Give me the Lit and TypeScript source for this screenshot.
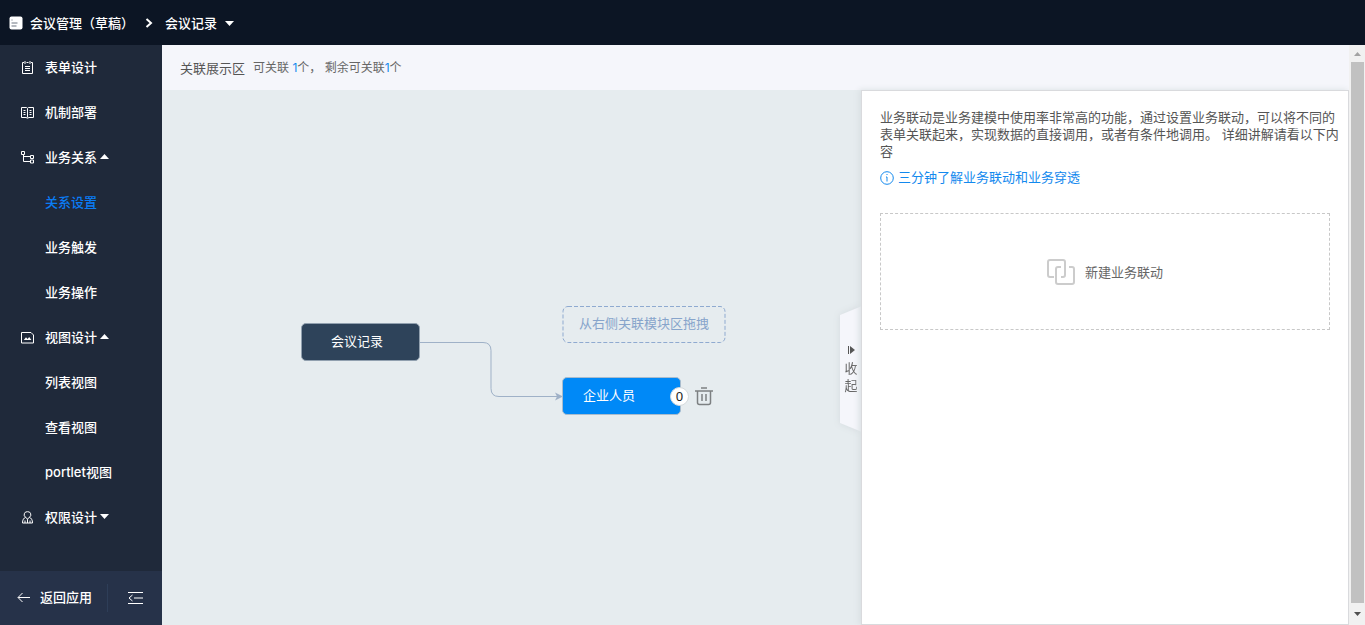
import { LitElement, html, css, svg, nothing } from "lit";
import { customElement, property, state } from "lit/decorators.js";
import { classMap } from "lit/directives/class-map.js";

const icons = {
  form: svg`<path d="M3 1.500H1.500v11h10v-11H10M4 0v3M9 0v3M5.500 1.500h2M4 5.500h5M4 7.500h5M4 9.500h5"/>`,
  book: svg`<path d="M.5 1.500h5l1 .8 1-.8h5v10H8l-1.500.700-1.500-.700H.5zM6.500 2.500v9M2.500 4.500h2M2.500 6.500h2M2.500 8.500h2M8.500 4.500h2M8.500 6.500h2M8.500 8.500h2"/>`,
  relation: svg`<path d="M.5 .5h3v3h-3zM2.500 4v6.500h7M2.500 5.500h7M9.500 4.500h3v3h-3zM9.500 9h3v3h-3z"/>`,
  view: svg`<path d="M.5 1.500h9.500l2.500 2.500v8h-12z"/><path d="M2.800 9l2.200-2.700L6.500 8l1.700-2L10.400 9z" fill="currentColor" stroke="none"/>`,
  user: svg`<path d="M6.500 .7a3 3 0 0 1 1.800 5.600c2 .7 3.200 2.500 3.200 5.700h-10c0-3.200 1.200-5 3.200-5.700A3 3 0 0 1 6.500 .7zM4.700 6.300l1.800 1.900 1.800-1.900M6.500 8.200V12M4 9.500V12M9 9.500V12"/>`,
};

type Entry = { label: string; icon?: keyof typeof icons; children?: string[]; open?: boolean };

@customElement("side-nav")
class SideNav extends LitElement {
  @property() current = "关系设置";
  @state() entries: Entry[] = [
    { label: "表单设计", icon: "form" },
    { label: "机制部署", icon: "book" },
    { label: "业务关系", icon: "relation", open: true, children: ["关系设置", "业务触发", "业务操作"] },
    { label: "视图设计", icon: "view", open: true, children: ["列表视图", "查看视图", "portlet视图"] },
    { label: "权限设计", icon: "user", open: false, children: [] },
  ];

  static styles = css`
    :host { display: flex; flex-direction: column; background: #1f293a; color: #fff; }
    nav { flex: 1; overflow: hidden; }
    ul { list-style: none; margin: 0; padding: 0; }
    .item {
      display: flex; align-items: center; width: 100%; height: 45px; box-sizing: border-box;
      padding: 0 0 2px 45px; border: 0; background: none; color: inherit; font: inherit;
      font-weight: 500; text-decoration: none; cursor: pointer;
    }
    .item.top { padding-left: 21px; }
    .item.active { color: #0a7cf5; }
    .icon { width: 13px; height: 13px; margin: 2px 11px 0 0; fill: none; stroke: currentColor; stroke-width: 1; }
    .caret { width: 9px; height: 5px; margin-left: 3px; fill: #fff; }
    .caret.closed { transform: rotate(180deg); }
    .foot { display: flex; align-items: center; height: 54px; background: #263249; }
    .back, .fold { display: flex; align-items: center; border: 0; background: none; color: inherit; font: inherit; font-weight: 500; padding: 0; cursor: pointer; }
    .back { width: 90px; height: 28px; padding: 0 0 0 17px; gap: 9px; border-right: 1px solid #2e3e58; box-sizing: content-box; }
    .back span { padding-bottom: 2px; }
    .fold { flex: 1; justify-content: center; }
    .line { fill: none; stroke: #fff; stroke-width: 1; }
  `;

  toggle(entry: Entry) {
    if (!entry.children) return;
    this.entries = this.entries.map((e) => (e === entry ? { ...e, open: !e.open } : e));
  }

  render() {
    return html`
      <nav aria-label="主导航">
        <ul>
          ${this.entries.map((e) => html`
            <li>
              <button class="item top" @click=${() => this.toggle(e)}>
                <svg class="icon" viewBox="0 0 13 13" aria-hidden="true">${e.icon ? icons[e.icon] : nothing}</svg>
                <span>${e.label}</span>
                ${e.children
                  ? html`<svg class=${classMap({ caret: true, closed: !e.open })} viewBox="0 0 9 5" aria-hidden="true"><path d="M0 5L4.500 0L9 5z"/></svg>`
                  : nothing}
              </button>
              ${e.children && e.open
                ? html`<ul>${e.children.map((c) => html`
                    <li><a href="#" class=${classMap({ item: true, active: c === this.current })}>${c}</a></li>`)}</ul>`
                : nothing}
            </li>`)}
        </ul>
      </nav>
      <div class="foot">
        <button class="back">
          <svg class="line" width="14" height="12" viewBox="0 0 14 12" aria-hidden="true"><path d="M13 5.500H1.200M5.500 1L1 5.500l4.500 4.500"/></svg>
          <span>返回应用</span>
        </button>
        <button class="fold" aria-label="收起菜单">
          <svg class="line" width="15" height="14" viewBox="0 0 15 14" aria-hidden="true"><path d="M0 1.500h15M6 7h9M0 12.500h15M4.500 4L1 7l3.500 3"/></svg>
        </button>
      </div>`;
  }
}

@customElement("relation-canvas")
class RelationCanvas extends LitElement {
  static styles = css`
    :host { display: block; position: relative; background: #e6ecef; overflow: hidden; }
    .edge { position: absolute; left: 257px; top: 251px; fill: none; stroke: #9fb1c7; }
    .arrow { fill: #9fb1c7; stroke: none; }
    .node { position: absolute; box-sizing: border-box; border-radius: 5px; display: flex; align-items: center; color: #fff; padding-bottom: 2px; }
    .root { left: 139px; top: 233px; width: 119px; height: 38px; padding-left: 29px; background: #2e435a; border: 1px solid #91a0af; }
    .target { left: 400px; top: 287px; width: 119px; height: 38px; padding-left: 20px; background: #0089f7; border: 1px solid #a9bccd; }
    .drop { left: 400px; top: 215px; width: 164px; height: 38px; justify-content: center; }
    .drop span { color: #87a4cb; }
    .outline { position: absolute; inset: 0; width: 100%; height: 100%; fill: none; stroke: #8faad0; stroke-dasharray: 4 2; }
    .badge {
      position: absolute; left: 508px; top: 297px; width: 19px; height: 19px; box-sizing: border-box;
      border: 1px solid #d5dadd; border-radius: 50%; background: #fff; color: #222;
      font-family: "Noto Sans", sans-serif; font-size: 13px; line-height: 17px; text-align: center;
    }
    .remove { position: absolute; left: 533px; top: 297px; padding: 0; border: 0; background: none; cursor: pointer; line-height: 0; }
    .trash { fill: none; stroke: #7d8082; stroke-width: 1.500; }
    .tab {
      position: absolute; right: -1px; top: 216px; width: 22px; height: 126px; padding: 0; border: 0;
      background: none; color: #666; font: inherit; line-height: 17px; cursor: pointer;
      filter: drop-shadow(0 0 3px #d3dade);
    }
    .shape { position: absolute; inset: 0; fill: #f5f6fb; }
    .label { position: relative; display: flex; flex-direction: column; align-items: center; gap: 2px; padding-top: 2px; }
    .play { fill: #555; margin-bottom: 4px; }
  `;

  render() {
    return html`
      <svg class="edge" width="145" height="64" viewBox="0 0 145 64" aria-hidden="true">
        <path d="M0 1.500h64q8 0 8 8v38q0 8 8 8h58"/>
        <path class="arrow" d="M136 51.500l8 4-8 4 2-4z"/>
      </svg>
      <div class="node root">会议记录</div>
      <div class="node drop">
        <svg class="outline" aria-hidden="true"><rect x="1" y="1.500" width="162" height="36" rx="5"/></svg>
        <span>从右侧关联模块区拖拽</span>
      </div>
      <div class="node target">企业人员</div>
      <div class="badge">0</div>
      <button class="remove" aria-label="删除">
        <svg class="trash" width="18" height="19" viewBox="0 0 18 19" aria-hidden="true">
          <path d="M0 4h18M6 1h6M2.500 4v11.500q0 2 2 2h9q2 0 2-2V4M7 7v7M11 7v7"/>
        </svg>
      </button>
      <button class="tab">
        <svg class="shape" width="22" height="126" viewBox="0 0 22 126" aria-hidden="true"><path d="M22 0L0 9v108l22 9z"/></svg>
        <span class="label">
          <svg class="play" width="7" height="8" viewBox="0 0 7 8" aria-hidden="true"><path d="M0 0h1v8H0zM2 0l5 4-5 4z"/></svg>
          <span>收<br />起</span>
        </span>
      </button>`;
  }
}

@customElement("linkage-panel")
class LinkagePanel extends LitElement {
  static styles = css`
    :host { display: block; position: relative; box-sizing: border-box; background: #fff; border: 1px solid #d9dadd; padding: 18px; color: #555; box-shadow: -2px 0 6px #d9dfe2; }
    p { margin: 0 -10px 0 0; line-height: 17px; color: #555; }
    .guide { display: flex; align-items: center; gap: 4px; margin: 9px 0 27px; line-height: 17px; color: #1389ee; text-decoration: none; }
    .info { fill: none; stroke: currentColor; }
    .create {
      display: flex; align-items: center; justify-content: center; gap: 10px; width: 100%; height: 117px;
      border: 1px dashed #c8c8c8; background: none; font: inherit; color: #666; cursor: pointer; padding: 0;
    }
    .link { fill: none; stroke: #ccc; stroke-width: 2; }
  `;

  render() {
    return html`
      <p>业务联动是业务建模中使用率非常高的功能，通过设置业务联动，可以将不同的表单关联起来，实现数据的直接调用，或者有条件地调用。 详细讲解请看以下内容</p>
      <a class="guide" href="#">
        <svg class="info" width="14" height="14" viewBox="0 0 14 14" aria-hidden="true"><circle cx="7" cy="7" r="6.300"/><path d="M6.500 3.500h1M6 6h1v4.500"/></svg>
        三分钟了解业务联动和业务穿透
      </a>
      <button class="create">
        <svg class="link" width="28" height="26" viewBox="0 0 28 26" aria-hidden="true">
          <path d="M7 18H3q-2 0-2-2V3q0-2 2-2h13q2 0 2 2v13q0 2-2 2h-2M14 8h-3q-2 0-2 2v13q0 2 2 2h14q2 0 2-2V10q0-2-2-2h-3"/>
        </svg>
        新建业务联动
      </button>`;
  }
}

@customElement("app-root")
class AppRoot extends LitElement {
  static styles = css`
    :host {
      display: flex; flex-direction: column; height: 100vh; overflow: hidden;
      font: 13px/18px Inter, "Noto Sans CJK SC", sans-serif;
    }
    header { display: flex; align-items: center; height: 45px; flex: none; padding-left: 9px; background: #0c1524; color: #fff; font-weight: 500; }
    .crumb { display: flex; align-items: center; gap: 7px; border: 0; padding: 0; background: none; font: inherit; color: inherit; cursor: pointer; }
    .sep { fill: none; stroke: #fff; stroke-width: 2; margin: 0 12px 0 11px; }
    .down { fill: #fff; margin: 2px 0 0 1px; }
    .body { flex: 1; display: flex; min-height: 0; }
    side-nav { width: 162px; flex: none; }
    main { flex: 1; min-width: 0; display: flex; flex-direction: column; background: #f5f6fb; }
    .bar { display: flex; align-items: center; height: 45px; flex: none; padding-left: 18px; gap: 8px; color: #555; }
    .quota { font-size: 12px; color: #666; white-space: pre; }
    .quota b { font-weight: 400; color: #1389ee; }
    .stage { flex: 1; display: flex; min-height: 0; }
    relation-canvas { flex: 1; }
    linkage-panel { width: 488px; flex: none; }
    .scroll { position: relative; display: flex; flex-direction: column; align-items: center; width: 16px; flex: none; background: #f1f1f1; }
    .end { height: 17px; display: flex; align-items: center; fill: #a3a3a3; }
    .end.bottom { height: 22px; fill: #505050; }
    .thumb { flex: 1; width: 13px; background: #c1c1c1; }
  `;

  render() {
    return html`
      <header>
        <button class="crumb">
          <svg width="14" height="14" viewBox="0 0 14 14" aria-hidden="true">
            <rect x=".5" y=".5" width="13" height="13" rx="2" fill="#fff"/>
            <path d="M2.500 4h1M2.500 7h6M2.500 10h5" stroke="#6d7480" fill="none"/>
          </svg>
          会议管理（草稿）
        </button>
        <svg class="sep" width="8" height="10" viewBox="0 0 8 10" aria-hidden="true"><path d="M1.500 1l4.500 4-4.500 4"/></svg>
        <button class="crumb">
          会议记录
          <svg class="down" width="9" height="5" viewBox="0 0 9 5" aria-hidden="true"><path d="M0 0h9L4.500 5z"/></svg>
        </button>
      </header>
      <div class="body">
        <side-nav></side-nav>
        <main>
          <div class="bar">
            <span>关联展示区</span>
            <span class="quota">可关联 <b>1</b>个， 剩余可关联<b>1</b>个</span>
          </div>
          <div class="stage">
            <relation-canvas></relation-canvas>
            <linkage-panel></linkage-panel>
          </div>
        </main>
        <div class="scroll" aria-hidden="true">
          <div class="end"><svg width="7" height="4" viewBox="0 0 7 4"><path d="M0 4l3.500-4L7 4z"/></svg></div>
          <div class="thumb"></div>
          <div class="end bottom"><svg width="7" height="4" viewBox="0 0 7 4"><path d="M0 0h7L3.500 4z"/></svg></div>
        </div>
      </div>`;
  }
}
